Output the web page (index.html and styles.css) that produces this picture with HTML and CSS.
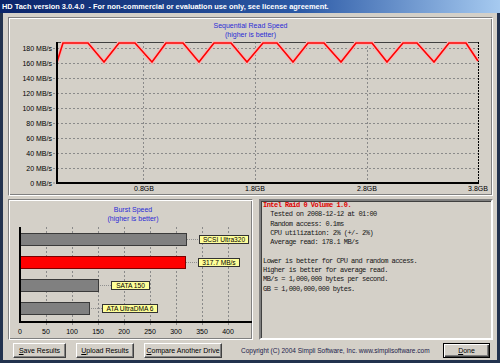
FILE: index.html
```html
<!DOCTYPE html>
<html lang="en">
<head>
    <meta charset="UTF-8">
    <title>HD Tach</title>
    <link rel="stylesheet" href="styles.css">
</head>
<body>
    <div class="window">
        <div class="titlebar">HD Tach version 3.0.4.0  - For non-commercial or evaluation use only, see license agreement.</div>
        <div class="frame">
            <section class="panel seq">
                <div class="chart-title">Sequential Read Speed<br>(higher is better)</div>
                <svg class="seq-plot" width="484" height="156" viewBox="0 0 484 156">
                    <g class="grid">
                        <line x1="44" y1="129.5" x2="469" y2="129.5"/>
                        <line x1="44" y1="114.5" x2="469" y2="114.5"/>
                        <line x1="44" y1="99.5" x2="469" y2="99.5"/>
                        <line x1="44" y1="84.5" x2="469" y2="84.5"/>
                        <line x1="44" y1="69.5" x2="469" y2="69.5"/>
                        <line x1="44" y1="54.5" x2="469" y2="54.5"/>
                        <line x1="44" y1="39.5" x2="469" y2="39.5"/>
                        <line x1="44" y1="24.5" x2="469" y2="24.5"/>
                        <line x1="44" y1="9.5" x2="469" y2="9.5"/>
                        <line x1="44" y1="144" x2="48" y2="144"/>
                        <line x1="134.5" y1="3" x2="134.5" y2="148"/>
                        <line x1="246.5" y1="3" x2="246.5" y2="148"/>
                        <line x1="358.5" y1="3" x2="358.5" y2="148"/>
                    </g>
                    <line class="frame-top" x1="48" y1="3.5" x2="469" y2="3.5"/>
                    <line class="frame-right" x1="469.5" y1="3" x2="469.5" y2="144"/>
                    <path class="trace-glow" d="M48 23 L54 4 L79 4 L95 23 L110 4 L126 4 L143 23 L157 4 L174 4 L190 23 L205 4 L222 4 L238 23 L254 4 L268 4 L284 23 L299 4 L315 4 L332 23 L347 4 L363 4 L378 23 L394 4 L408 4 L425 23 L440 4 L457 4 L469 22"/>
                    <path class="trace" d="M48 23 L54 4 L79 4 L95 23 L110 4 L126 4 L143 23 L157 4 L174 4 L190 23 L205 4 L222 4 L238 23 L254 4 L268 4 L284 23 L299 4 L315 4 L332 23 L347 4 L363 4 L378 23 L394 4 L408 4 L425 23 L440 4 L457 4 L469 22"/>
                    <line class="axis" x1="48" y1="3" x2="48" y2="145"/>
                    <line class="axis" x1="47" y1="144" x2="470" y2="144"/>
                    <g class="y-labels">
                        <text x="43" y="9.5">180 MB/s</text>
                        <text x="43" y="24.5">160 MB/s</text>
                        <text x="43" y="39.5">140 MB/s</text>
                        <text x="43" y="54.5">120 MB/s</text>
                        <text x="43" y="69.5">100 MB/s</text>
                        <text x="43" y="84.5">80 MB/s</text>
                        <text x="43" y="99.5">60 MB/s</text>
                        <text x="43" y="114.5">40 MB/s</text>
                        <text x="43" y="129.5">20 MB/s</text>
                        <text x="43" y="144">0 MB/s</text>
                    </g>
                    <g class="x-labels">
                        <text x="135" y="149.5">0.8GB</text>
                        <text x="246" y="149.5">1.8GB</text>
                        <text x="358" y="149.5">2.8GB</text>
                        <text x="469" y="149.5">3.8GB</text>
                    </g>
                </svg>
            </section>

            <div class="lower">
                <section class="panel burst">
                    <div class="chart-title">Burst Speed<br>(higher is better)</div>
                    <svg class="burst-plot" width="243" height="116" viewBox="0 0 243 116">
                        <g class="grid">
                            <line x1="37.5" y1="4" x2="37.5" y2="102"/>
                            <line x1="63.5" y1="4" x2="63.5" y2="102"/>
                            <line x1="89.5" y1="4" x2="89.5" y2="102"/>
                            <line x1="115.5" y1="4" x2="115.5" y2="102"/>
                            <line x1="141.5" y1="4" x2="141.5" y2="102"/>
                            <line x1="167.5" y1="4" x2="167.5" y2="102"/>
                            <line x1="193.5" y1="4" x2="193.5" y2="102"/>
                            <line x1="219.5" y1="4" x2="219.5" y2="102"/>
                        </g>

                        <g class="connectors">
                            <line x1="178" y1="16.5" x2="190" y2="16.5"/>
                            <line x1="177" y1="39.5" x2="189" y2="39.5"/>
                            <line x1="89" y1="62.5" x2="102" y2="62.5"/>
                            <line x1="80" y1="85.5" x2="93" y2="85.5"/>
                        </g>

                        <rect class="bar" x="11.5" y="10.5" width="166" height="12"/>
                        <rect class="bar bar-own" x="11.5" y="33.5" width="165" height="12"/>
                        <rect class="bar" x="11.5" y="56.5" width="78" height="12"/>
                        <rect class="bar" x="11.5" y="79.5" width="69" height="12"/>

                        <g class="tags">
                            <rect x="190.5" y="12.5" width="49" height="8"/>
                            <text x="215" y="16.8">SCSI Ultra320</text>
                            <rect x="189.5" y="35.5" width="41" height="8"/>
                            <text x="210" y="39.8">317.7 MB/s</text>
                            <rect x="102.5" y="58.5" width="38" height="8"/>
                            <text x="121.5" y="62.8">SATA 150</text>
                            <rect x="93.5" y="81.5" width="55" height="8"/>
                            <text x="121" y="85.8">ATA UltraDMA 6</text>
                        </g>

                        <line class="axis" x1="11" y1="4" x2="11" y2="100"/>
                        <line class="axis" x1="10" y1="99" x2="243" y2="99"/>

                        <g class="x-labels">
                            <text x="11" y="108">0</text>
                            <text x="37" y="108">50</text>
                            <text x="63" y="108">100</text>
                            <text x="89" y="108">150</text>
                            <text x="115" y="108">200</text>
                            <text x="141" y="108">250</text>
                            <text x="167" y="108">300</text>
                            <text x="193" y="108">350</text>
                            <text x="219" y="108">400</text>
                        </g>
                    </svg>
                </section>
<pre class="report"><span class="drive">Intel Raid 0 Volume 1.0.</span>
  Tested on 2008-12-12 at 01:00
  Random access: 0.1ms
  CPU utilization: 2% (+/- 2%)
  Average read: 178.1 MB/s

Lower is better for CPU and random access.
Higher is better for average read.
MB/s = 1,000,000 bytes per second.
GB = 1,000,000,000 bytes.</pre>
            </div>

            <div class="footer">
                <button class="btn btn-save"><u>S</u>ave Results</button>
                <button class="btn btn-upload"><u>U</u>pload Results</button>
                <button class="btn btn-compare"><u>C</u>ompare Another Drive</button>
                <span class="copyright">Copyright (C) 2004 Simpli Software, Inc. www.simplisoftware.com</span>
                <button class="btn btn-done"><u>D</u>one</button>
            </div>
        </div>
    </div>
</body>
</html>
```

FILE: styles.css
```css
* {
    box-sizing: border-box;
}

body {
    margin: 0;
    background: #d4d0c8;
    font-family: "Liberation Sans", Arial, sans-serif;
}

.window {
    width: 500px;
    height: 363px;
    display: flex;
    flex-direction: column;
    background: #d4d0c8;
}

.titlebar {
    height: 13px;
    padding-left: 2px;
    background: linear-gradient(to right, #0a246a, #2c5aa6 60%, #a6caf0);
    color: #fff;
    font-size: 7.4px;
    font-weight: bold;
    line-height: 13px;
    white-space: pre;
    overflow: hidden;
}

.frame {
    flex: 1;
    display: flex;
    flex-direction: column;
    gap: 3px;
    padding: 4px 4px 2px 5px;
    border: solid #22324e;
    border-width: 0 3px 3px 3px;
    min-height: 0;
}

.panel {
    border: 1px solid;
    border-color: #808080 #fff #fff #808080;
    box-shadow: inset 1px 1px #fff, inset -1px -1px #808080;
    overflow: hidden;
}

.seq {
    height: 179px;
    flex-shrink: 0;
}

.chart-title {
    color: #2b2bd6;
    font-size: 7px;
    line-height: 9px;
    text-align: center;
    padding-top: 3px;
}

svg {
    display: block;
}

svg text {
    font-family: "Liberation Sans", Arial, sans-serif;
    font-size: 7px;
    fill: #000;
    dominant-baseline: central;
}

.grid line {
    stroke: #8a8a8a;
    stroke-width: 1;
    stroke-dasharray: 2 2;
}

.axis {
    stroke: #000;
    stroke-width: 2;
}

.frame-top {
    stroke: #404040;
    stroke-width: 1;
}

.frame-right {
    stroke: #000;
    stroke-width: 1;
    stroke-dasharray: 2 1;
}

.trace {
    fill: none;
    stroke: #f00;
    stroke-width: 1.6;
}

.trace-glow {
    fill: none;
    stroke: #f2b8b8;
    stroke-width: 4;
}

.y-labels text {
    text-anchor: end;
}

.x-labels text {
    text-anchor: middle;
}

.lower {
    display: flex;
    gap: 6px;
    height: 141px;
    flex-shrink: 0;
}

.burst {
    width: 245px;
    flex-shrink: 0;
}

.burst .chart-title {
    padding-top: 5px;
    padding-left: 5px;
}

.bar {
    fill: #808080;
    stroke: #3a3a3a;
    stroke-width: 1;
}

.bar-own {
    fill: #ff0000;
    stroke: #7a0000;
}

.connectors line {
    stroke: #909090;
    stroke-width: 1;
    stroke-dasharray: 1 1;
}

.tags rect {
    fill: #ffff99;
    stroke: #333;
    stroke-width: 1;
}

.tags text {
    text-anchor: middle;
    font-size: 6.6px;
}

.report {
    flex: 1;
    margin: 0;
    padding: 0 2px;
    border: 2px solid;
    border-color: #808080 #fff #fff #808080;
    box-shadow: inset 1px 1px #404040;
    background: #d4d0c8;
    color: #151515;
    font-family: "Liberation Mono", "DejaVu Sans Mono", monospace;
    font-size: 7px;
    line-height: 9.3px;
    letter-spacing: -0.53px;
    overflow: hidden;
}

.report .drive {
    color: #e00000;
    font-weight: bold;
}

.footer {
    display: flex;
    align-items: center;
    height: 15px;
    flex-shrink: 0;
}

.btn {
    height: 15px;
    padding: 0;
    background: #d4d0c8;
    border: 1px solid;
    border-color: #fff #404040 #404040 #fff;
    box-shadow: inset -1px -1px #808080;
    color: #000;
    font-family: "Liberation Sans", Arial, sans-serif;
    font-size: 7px;
    white-space: nowrap;
}

.btn-save {
    width: 53px;
    margin-left: 5px;
}

.btn-upload {
    width: 58px;
    margin-left: 10px;
}

.btn-compare {
    width: 78px;
    margin-left: 10px;
}

.copyright {
    margin-left: 19px;
    font-size: 6.5px;
    color: #20204a;
    white-space: nowrap;
}

.btn-done {
    width: 47px;
    margin-left: auto;
    margin-right: 3px;
    border: 1px solid #000;
    box-shadow: inset 1px 1px #fff, inset -1px -1px #404040, inset -2px -2px #808080;
}
```
